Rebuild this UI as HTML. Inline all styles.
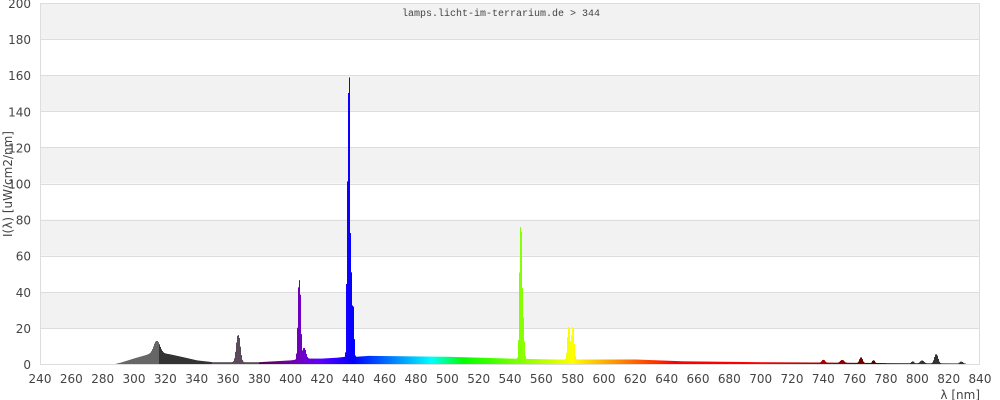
<!DOCTYPE html>
<html><head><meta charset="utf-8"><style>
html,body{margin:0;padding:0;background:#fff;width:1000px;height:400px;overflow:hidden}
svg{display:block}
text{font-family:"DejaVu Sans","Liberation Sans",sans-serif;font-size:12px;fill:#444}
</style></head><body>
<svg id="s" width="1000" height="400" xmlns="http://www.w3.org/2000/svg">
<g id="bg"></g>
<g id="sp"></g>
<g id="ax"></g>
<text x="501" y="16" text-anchor="middle" style="font-family:'Liberation Mono','DejaVu Sans Mono',monospace;font-size:10px;fill:#444">lamps.licht-im-terrarium.de &gt; 344</text>
<text transform="translate(12,184) rotate(-90)" text-anchor="middle">I(λ)  [uW/cm2/nm]</text>
<text x="980" y="399" text-anchor="end">λ [nm]</text>
</svg>
<script>
var NS="http://www.w3.org/2000/svg";
function el(p,t,a){var e=document.createElementNS(NS,t);for(var k in a)e.setAttribute(k,a[k]);p.appendChild(e);return e;}
var bg=document.getElementById('bg'),sp=document.getElementById('sp'),ax=document.getElementById('ax');
function Y(v){return 364-1.805*v;}
function X(l){return 40+(l-240)*940/600;}
for(var v=0;v<200;v+=20){var gray=((v/20)%2==1);el(bg,'rect',{x:40,y:Y(v+20),width:940,height:36.1,fill:gray?'#f2f2f2':'#fff'});}
for(var v=0;v<=200;v+=20){el(bg,'line',{x1:40,x2:980,y1:Math.round(Y(v))+0.5,y2:Math.round(Y(v))+0.5,stroke:'#ddd','stroke-width':1});
 var t=el(ax,'text',{x:31,y:Y(v)+5,'text-anchor':'end'});t.textContent=v;}
el(bg,'line',{x1:40.5,x2:40.5,y1:3,y2:364,stroke:'#ddd'});
el(bg,'line',{x1:979.5,x2:979.5,y1:3,y2:364,stroke:'#ddd'});
for(var l=240;l<=840;l+=20){var t=el(ax,'text',{x:X(l),y:383,'text-anchor':'middle'});t.textContent=l;}
var base=[[288,0],[292,0.8],[300,3],[310,5.5],[318,6],[322,5.5],[330,4],[340,2],[350,1],[380,1],[390,1.5],[400,2],[410,3],[420,3],[430,3.5],[435,4],[442,4],[450,4.5],[500,4],[540,3],[570,2.5],[620,2.5],[650,1.5],[700,1],[740,0.8],[780,0.5],[830,0.3],[832,0]];
var peaks=[[314.5,7,1.8],[366.5,15,1.1],[405.5,44,0.7],[408.5,6,1],[436.4,90,0.45],[437.3,138,0.35],[438.3,50,0.45],[439.7,28,0.5],[546.8,72,0.6],[548.2,20,0.6],[577.5,18,0.7],[580,18,0.7],[740,1.5,0.8],[752,1.5,1],[764,3,0.8],[772,1.5,0.6],[797,1,0.6],[803,1.5,1],[812,5,1],[828,1,0.8]];
function val(l){var b=0;for(var i=0;i<base.length-1;i++){if(l>=base[i][0]&&l<base[i+1][0]){var f=(l-base[i][0])/(base[i+1][0]-base[i][0]);b=base[i][1]+f*(base[i+1][1]-base[i][1]);}}
 for(var j=0;j<peaks.length;j++){var d=(l-peaks[j][0])/peaks[j][2];b+=peaks[j][1]*Math.exp(-d*d/2);}return b;}
function col(l){
 if(l<316)return '#666';if(l<350)return '#333';if(l<380)return '#5a4a5a';if(l>=780)return '#333';
 var r,g,b;
 if(l<440){r=-(l-440)/60;g=0;b=1;}else if(l<490){r=0;g=(l-440)/50;b=1;}else if(l<510){r=0;g=1;b=-(l-510)/20;}
 else if(l<580){r=(l-510)/70;g=1;b=0;}else if(l<645){r=1;g=-(l-645)/65;b=0;}else{r=1;g=0;b=0;}
 var f=1;if(l<420)f=0.3+0.7*(l-380)/40;else if(l>700)f=0.3+0.7*(780-l)/80;
 return 'rgb('+Math.round(255*r*f)+','+Math.round(255*g*f)+','+Math.round(255*b*f)+')';}
for(var px=40;px<980;px++){var m=0;for(var s=0;s<5;s++){var l=240+(px+s/5-40)*600/940;var v=val(l);if(v>m){m=v;}}
 var lc=240+(px+0.5-40)*600/940;if(m>0.2){el(sp,'rect',{x:px,y:Y(m),width:1,height:364-Y(m),fill:col(lc)});}}
</script>
</body></html>
